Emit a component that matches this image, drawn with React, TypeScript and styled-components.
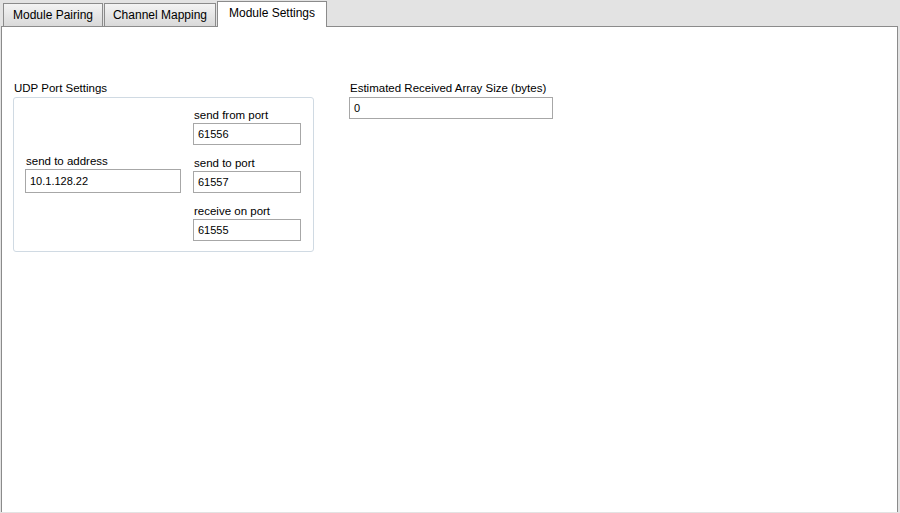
import React from "react";
import styled, { createGlobalStyle } from "styled-components";

const GlobalStyle = createGlobalStyle`
  html, body {
    margin: 0;
    padding: 0;
    background: #e3e3e3;
  }
  body {
    font-family: "Liberation Sans", Arial, sans-serif;
    color: #000;
  }
  * { box-sizing: border-box; }
`;

const Page = styled.div`
  width: 900px;
  height: 513px;
  overflow: hidden;
  background: #e3e3e3;
`;

const TabBar = styled.div`
  display: flex;
  align-items: flex-end;
  gap: 1px;
  height: 26px;
  padding-left: 3px;
  position: relative;
  z-index: 1;
`;

const Tab = styled.div<{ $active?: boolean; $w: number }>`
  width: ${(p) => p.$w}px;
  height: ${(p) => (p.$active ? 26 : 23)}px;
  margin-bottom: ${(p) => (p.$active ? -1 : 0)}px;
  border: 1px solid #8b8b8b;
  border-bottom: none;
  background: ${(p) =>
    p.$active ? "#ffffff" : "linear-gradient(to bottom, #f4f4f4 0%, #e6e6e6 50%, #d9d9d9 100%)"};
  display: flex;
  justify-content: center;
  align-items: ${(p) => (p.$active ? "flex-start" : "center")};
  padding-top: ${(p) => (p.$active ? 4 : 0)}px;
  font-size: 12px;
  line-height: 14px;
  white-space: nowrap;
`;

const Panel = styled.div`
  margin-left: 1px;
  width: 897px;
  height: 486px;
  background: #ffffff;
  border: 1px solid #8b8b8b;
  border-bottom: none;
  padding: 53px 0 0 11px;
  display: flex;
  align-items: flex-start;
  gap: 35px;
`;

const Column = styled.div`
  display: flex;
  flex-direction: column;
`;

const Caption = styled.div`
  font-size: 11.5px;
  line-height: 14px;
  height: 15px;
  padding-top: 1px;
  white-space: nowrap;
  margin-bottom: 2px;
  padding-left: 1px;
`;

const GroupBox = styled.div`
  width: 301px;
  height: 155px;
  border: 1px solid #d0dae3;
  border-radius: 3px;
  padding: 9px 12px 10px 11px;
  display: flex;
  gap: 12px;
`;

const AddressColumn = styled.div`
  width: 156px;
  display: flex;
  flex-direction: column;
  justify-content: center;
  padding-bottom: 2px;
`;

const PortColumn = styled.div`
  width: 108px;
  display: flex;
  flex-direction: column;
  gap: 10px;
`;

const Field = styled.div`
  display: flex;
  flex-direction: column;
`;

const FieldLabel = styled.div`
  font-size: 11.5px;
  line-height: 14px;
  height: 15px;
  padding-top: 1px;
  margin-bottom: 1px;
  padding-left: 1px;
  white-space: nowrap;
`;

const TextBox = styled.div<{ $w: number; $h?: number }>`
  width: ${(p) => p.$w}px;
  height: ${(p) => p.$h ?? 22}px;
  border: 1px solid #a7a7a7;
  background: #ffffff;
  font-size: 11px;
  line-height: 14px;
  padding-left: 4px;
  display: flex;
  align-items: center;
  white-space: nowrap;
`;

const ports = [
  { label: "send from port", value: "61556" },
  { label: "send to port", value: "61557" },
  { label: "receive on port", value: "61555" },
];

export default function App() {
  return (
    <Page>
      <GlobalStyle />
      <TabBar>
        <Tab $w={100}>Module Pairing</Tab>
        <Tab $w={112}>Channel Mapping</Tab>
        <Tab $w={110} $active>
          Module Settings
        </Tab>
      </TabBar>
      <Panel>
        <Column>
          <Caption>UDP Port Settings</Caption>
          <GroupBox>
            <AddressColumn>
              <Field>
                <FieldLabel>send to address</FieldLabel>
                <TextBox $w={156} $h={24}>
                  10.1.128.22
                </TextBox>
              </Field>
            </AddressColumn>
            <PortColumn>
              {ports.map((p) => (
                <Field key={p.label}>
                  <FieldLabel>{p.label}</FieldLabel>
                  <TextBox $w={108}>{p.value}</TextBox>
                </Field>
              ))}
            </PortColumn>
          </GroupBox>
        </Column>
        <Column>
          <Caption>Estimated Received Array Size (bytes)</Caption>
          <TextBox $w={204}>0</TextBox>
        </Column>
      </Panel>
    </Page>
  );
}
